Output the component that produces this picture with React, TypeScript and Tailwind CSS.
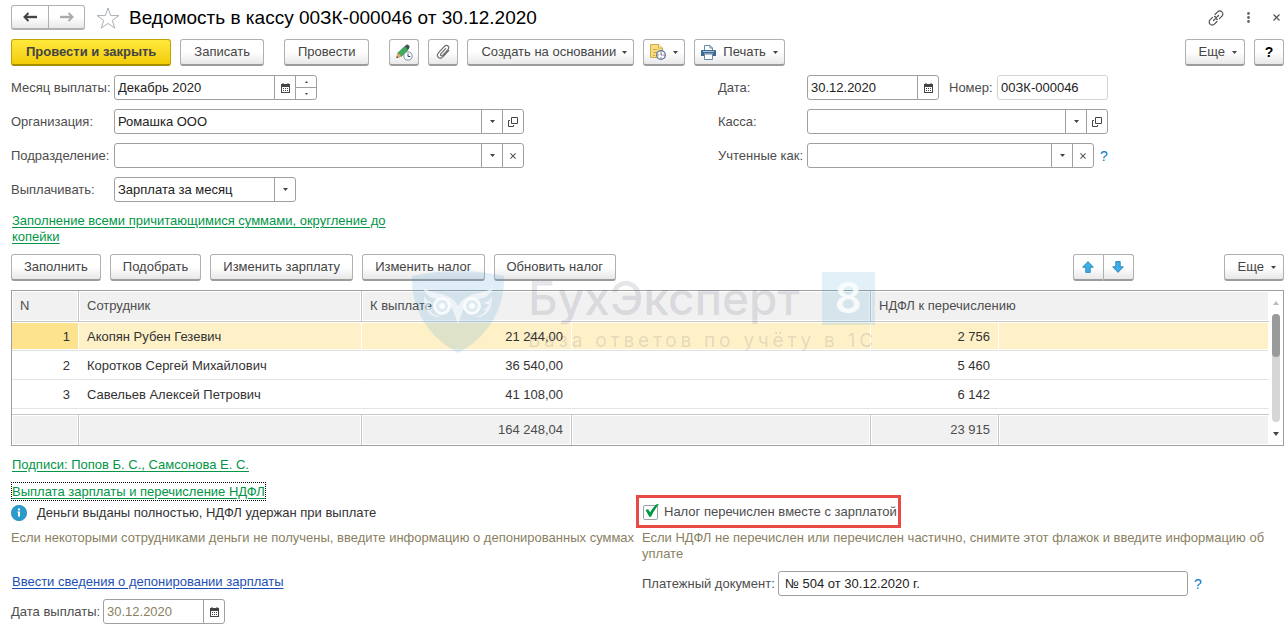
import React, { useState } from "react";

interface Employee {
  id: number;
  name: string;
  amount: string;
  tax: string;
}

const employees: Employee[] = [
  { id: 1, name: "Акопян Рубен Гезевич", amount: "21 244,00", tax: "2 756" },
  { id: 2, name: "Коротков Сергей Михайлович", amount: "36 540,00", tax: "5 460" },
  { id: 3, name: "Савельев Алексей Петрович", amount: "41 108,00", tax: "6 142" },
];

const buttonBase =
  "flex h-[27px] shrink-0 items-center justify-center rounded-[3px] border border-b-2 border-[#b0b0b0] border-b-[#9c9c9c] bg-linear-to-b from-white from-50% to-[#e8e8e8] whitespace-nowrap text-[#444]";
const fieldBox = "flex h-[25px] rounded-[3px] border border-[#a0a0a0] bg-white";
const inputBase = "min-w-0 flex-1 bg-transparent px-[3px] text-[#222] outline-none";
const addonBase = "flex w-[21px] shrink-0 items-center justify-center border-l border-[#a0a0a0] text-[#444]";
const greenLink = "text-[#009646] underline underline-offset-2";

/* ---------- Icons ---------- */

const Caret = () => (
  <svg width="5" height="3" viewBox="0 0 5 3" fill="currentColor" aria-hidden="true">
    <path d="M0 0h5L2.5 3z" />
  </svg>
);

const ArrowIcon = ({ flip }: { flip?: boolean }) => (
  <svg width="14" height="12" viewBox="0 0 14 12" fill="none" stroke="currentColor" strokeWidth="2.4" className={flip ? "rotate-180" : ""} aria-hidden="true">
    <path d="M14 6H2" />
    <path d="M5.5 2L1.500 6l4 4" strokeWidth="2" />
  </svg>
);

const StarIcon = () => (
  <svg width="24" height="22" viewBox="0 0 24 22" fill="none" stroke="#a9afb5" strokeWidth="1" aria-hidden="true">
    <path d="M12 1l2.7 7.6h8.2l-6.6 4.8 2.5 7.8-6.8-4.8-6.8 4.8 2.5-7.8L1.100 8.600h8.200z" />
  </svg>
);

const LinkIcon = () => (
  <svg width="16" height="16" viewBox="0 0 16 16" fill="none" stroke="#555" strokeWidth="1.200" strokeLinecap="round" aria-hidden="true">
    <path d="M7 4.500l2.600-2.600a2.900 2.900 0 0 1 4.300 0 2.900 2.900 0 0 1 0 4.300L11.500 8.600" />
    <path d="M9.500 9.300a2.600 2.600 0 0 1-2-.8M6.500 6.700a2.600 2.600 0 0 1 2 .8" />
    <path d="M9 11.500l-2.600 2.600a2.900 2.900 0 0 1-4.300 0 2.900 2.900 0 0 1 0-4.300L4.500 7.400" />
    <path d="M5.500 10.500l1-1M9.500 6.500l1-1" />
  </svg>
);

const DotsIcon = () => (
  <svg width="3" height="11" viewBox="0 0 3 11" fill="#666" aria-hidden="true">
    <circle cx="1.500" cy="1.500" r="1.400" />
    <circle cx="1.500" cy="5.500" r="1.400" />
    <circle cx="1.500" cy="9.500" r="1.400" />
  </svg>
);

const CrossIcon = ({ size = 6 }: { size?: number }) => (
  <svg width={size} height={size} viewBox="0 0 7 7" fill="none" stroke="#555" strokeWidth="1.200" aria-hidden="true">
    <path d="M.5.5l6 6M6.500.5l-6 6" />
  </svg>
);

const CalendarIcon = () => (
  <svg width="9" height="10" viewBox="0 0 9 10" aria-hidden="true">
    <path d="M0 1h9v9H0z" fill="#444" />
    <path d="M1 4h7v5H1z" fill="#fff" />
    <path d="M1.500 0h1v2h-1zM6.500 0h1v2h-1z" fill="#444" />
    <path d="M2 5h1v1H2zM4 5h1v1H4zM6 5h1v1H6zM2 7h1v1H2zM4 7h1v1H4zM6 7h1v1H6z" fill="#444" />
  </svg>
);

const OpenIcon = () => (
  <svg width="10" height="10" viewBox="0 0 10 10" fill="none" stroke="#444" aria-hidden="true">
    <path d="M3.500.5h6v6h-6z" />
    <path d="M2 3.500H.5v6h5V8" />
  </svg>
);

const PencilClockIcon = () => (
  <svg width="17" height="17" viewBox="0 0 17 17" aria-hidden="true">
    <path d="M8.600 2.500l3.400 3.400-6.400 6.400-3.800-3.400z" fill="#3fae5a" stroke="#2b7f42" strokeWidth=".6" />
    <path d="M8.600 2.500L10.300.8q1.200-.8 2.400.4t.8 2.600L12 5.900z" fill="#47525c" />
    <path d="M1.800 8.900l3.800 3.400-5.100 1.600z" fill="#e8b173" stroke="#b07a3c" strokeWidth=".5" />
    <path d="M.4 14l.6-2 1.400 1.400z" fill="#444" />
    <circle cx="12" cy="12" r="4.100" fill="#fff" stroke="#7d93a8" />
    <path d="M12 9.500V12.500h2.300" fill="none" stroke="#2e4a66" />
  </svg>
);

const ClipIcon = () => (
  <svg width="15" height="16" viewBox="0 0 15 16" fill="none" stroke="#666" strokeWidth="1.100" strokeLinecap="round" aria-hidden="true">
    <path d="M9.700 4.700L5 9.700c-1.300 1.500.4 2.900 1.700 1.600l5.200-5.700c2.400-2.800-.9-5.800-3.500-3.200L2.600 8.600c-3.200 3.800.9 7.400 4.300 4.200l6-6.500" />
  </svg>
);

const NoteClockIcon = () => (
  <svg width="16" height="16" viewBox="0 0 16 16" aria-hidden="true">
    <path d="M.5.5h8l4 3.500v9.500H.5z" fill="#f8dc85" stroke="#d3ab45" />
    <path d="M8.500.5V4h4" fill="#fdf0c0" stroke="#d3ab45" />
    <path d="M3 5.500h4M3 8.500h4M3 11.500h2" stroke="#cfa63c" />
    <circle cx="11" cy="11" r="4.300" fill="#fff" stroke="#4b7aa8" strokeWidth="1.300" />
    <path d="M11 7.500v1.200M11 13.300v1.200M7.500 11h1.200M13.300 11h1.200" stroke="#e02020" />
    <path d="M11 11V9M11 11h1.500" stroke="#4b7aa8" />
  </svg>
);

const PrinterIcon = () => (
  <svg width="15" height="15" viewBox="0 0 15 15" aria-hidden="true">
    <path d="M3.500 6V.5h5.500l2.500 2.500v3" fill="#fff" stroke="#6488a8" />
    <path d="M9 .5V3h2.500" fill="none" stroke="#6488a8" />
    <path d="M1 5h13q1 0 1 1v5h-3V8.500H3V11H0V6q0-1 1-1z" fill="#3b6a94" />
    <path d="M2 6.500h11" stroke="#a9c4db" />
    <path d="M3.500 9h8v5.500h-8z" fill="#fff" stroke="#6488a8" />
  </svg>
);

const MoveIcon = ({ down }: { down?: boolean }) => (
  <svg width="12" height="12" viewBox="0 0 12 12" className={down ? "rotate-180" : ""} aria-hidden="true">
    <path d="M6 .6l5.300 5.600H8.200v5.200H3.800V6.200H.7z" fill="#3bb0ee" stroke="#2c7dac" strokeWidth=".9" />
  </svg>
);

const InfoIcon = () => (
  <svg width="16" height="16" viewBox="0 0 16 16" aria-hidden="true">
    <circle cx="8" cy="8" r="7.700" fill="#2a9bcd" stroke="#1c7ba8" strokeWidth=".6" />
    <path d="M7 3.500h2v2H7zM6.300 6.500H9v5H7v-4h-.7z" fill="#fff" />
  </svg>
);

const OwlShield = () => (
  <svg width="92" height="82" viewBox="0 0 92 82" className="shrink-0" aria-hidden="true">
    <path d="M0 5Q46-5 92 5C93 38 76 66 46 82 16 66-1 38 0 5z" fill="#3f9bd1" fillOpacity=".17" />
    <g fill="#fff" fillOpacity=".6">
      <path d="M11 16c7 7 18 5 26 10 4 2 7 5 9 9 2-4 5-7 9-9 8-5 19-3 26-10-2 9-9 11-17 13-7 2-12 6-14 13l-4 11-4-11c-2-7-7-11-14-13-8-2-15-4-17-13z" />
      <path d="M12 25c2 4 5 6 9 7-3 1-4 1-6 1 1 3 3 5 6 6l-3 1c3 4 7 5 12 5-8 3-19-3-18-20zM80 25c-2 4-5 6-9 7 3 1 4 1 6 1-1 3-3 5-6 6l3 1c-3 4-7 5-12 5 8 3 19-3 18-20z" />
    </g>
    <g fill="#dfeaf1" stroke="#fff" strokeOpacity=".8" strokeWidth="3">
      <circle cx="30" cy="35" r="7.500" />
      <circle cx="60" cy="35" r="7.500" />
    </g>
    <circle cx="30" cy="35" r="3" fill="#fff" fillOpacity=".8" />
    <circle cx="60" cy="35" r="3" fill="#fff" fillOpacity=".8" />
  </svg>
);

/* ---------- Small controls ---------- */

interface ToolButtonProps {
  children: React.ReactNode;
  className?: string;
  label?: string;
}

const ToolButton = ({ children, className = "px-3", label }: ToolButtonProps) => (
  <button type="button" aria-label={label} className={`${buttonBase} ${className}`}>
    {children}
  </button>
);

const Addon = ({ children, label }: { children: React.ReactNode; label: string }) => (
  <button type="button" aria-label={label} className={addonBase}>
    {children}
  </button>
);

const HelpLink = () => (
  <a href="#help" className="ml-[6px] text-sm text-[#0a7ac8]">?</a>
);

const Watermark = () => (
  <div className="pointer-events-none absolute top-[17px] left-[401px] flex gap-6" aria-hidden="true">
    <OwlShield />
    <div className="font-[Inter,sans-serif] text-[#32325a]/14">
      <div className="flex h-[54px] items-center gap-[22px]">
        <span className="text-[46px] leading-[54px] font-medium">БухЭксперт</span>
        <span className="flex h-[53px] w-[53px] items-center justify-center bg-[#3f9bd1]/15 text-[42px] font-semibold text-white/80">8</span>
      </div>
      <div className="text-[19px] leading-[32px] tracking-[0.2em] whitespace-nowrap">База ответов по учёту в 1С</div>
    </div>
  </div>
);

const App = () => {
  const [selected, setSelected] = useState(1);
  const [taxPaid, setTaxPaid] = useState(true);

  return (
    <div className="bg-white pt-[5px] pr-1 pl-[11px] font-['Liberation_Sans',Arial,sans-serif] text-[13px] leading-4 text-[#4d4d4d]">
      {/* Title */}
      <header className="flex h-[25px] items-center">
        <div className="flex">
          <button type="button" aria-label="Назад" className="flex h-[25px] w-[38px] items-center justify-center rounded-l-[3px] border border-b-2 border-[#b0b0b0] bg-linear-to-b from-white from-50% to-[#e8e8e8] text-[#444]">
            <ArrowIcon />
          </button>
          <button type="button" aria-label="Вперед" className="flex h-[25px] w-[36px] items-center justify-center rounded-r-[3px] border border-b-2 border-l-0 border-[#b0b0b0] bg-linear-to-b from-white from-50% to-[#e8e8e8] text-[#aaa]">
            <ArrowIcon flip />
          </button>
        </div>
        <button type="button" aria-label="В избранное" className="ml-[11px]">
          <StarIcon />
        </button>
        <h1 className="ml-[9px] text-[19px] text-black">Ведомость в кассу 00ЗК-000046 от 30.12.2020</h1>
        <div className="mr-1 ml-auto flex items-center gap-[23px]">
          <button type="button" aria-label="Получить ссылку"><LinkIcon /></button>
          <button type="button" aria-label="Меню"><DotsIcon /></button>
          <button type="button" aria-label="Закрыть"><CrossIcon size={7} /></button>
        </div>
      </header>

      {/* Main commands */}
      <div className="mt-[9px] flex">
        <button type="button" className="flex h-[27px] items-center rounded-[3px] border border-b-2 border-[#c2a200] border-b-[#a88c00] bg-linear-to-b from-[#ffe93b] to-[#f3cc00] px-[14px] font-bold whitespace-nowrap text-[#444]">
          Провести и закрыть
        </button>
        <ToolButton className="ml-[9px] px-[13px]">Записать</ToolButton>
        <ToolButton className="ml-5 px-[13px]">Провести</ToolButton>
        <ToolButton label="Журнал изменений" className="ml-5 w-[30px]"><PencilClockIcon /></ToolButton>
        <ToolButton label="Присоединенные файлы" className="ml-[9px] w-[30px]"><ClipIcon /></ToolButton>
        <ToolButton className="ml-[9px] gap-[6px] pr-[6px] pl-[13px]">Создать на основании <Caret /></ToolButton>
        <ToolButton label="Напоминание" className="ml-[9px] w-[42px] gap-[7px]"><NoteClockIcon /><Caret /></ToolButton>
        <ToolButton className="ml-[9px] gap-[7px] px-[6px]"><PrinterIcon />Печать <Caret /></ToolButton>
        <div className="ml-auto flex gap-[9px]">
          <ToolButton className="gap-[7px] pr-[7px] pl-[13px]">Еще <Caret /></ToolButton>
          <ToolButton className="w-[30px] text-sm font-bold text-black">?</ToolButton>
        </div>
      </div>

      {/* Document fields */}
      <div className="mt-[9px] grid grid-cols-[707fr_566fr]">
        <div className="grid max-w-[513px] grid-cols-[103px_1fr] items-center gap-y-[9px]">
          <label htmlFor="month">Месяц выплаты:</label>
          <div className={`${fieldBox} w-[203px]`}>
            <input id="month" className={inputBase} defaultValue="Декабрь 2020" />
            <Addon label="Выбрать месяц"><CalendarIcon /></Addon>
            <div className="flex w-[21px] flex-col border-l border-[#a0a0a0]">
              <button type="button" aria-label="Больше" className="flex flex-1 items-center justify-center border-b border-[#a0a0a0]">
                <svg width="3" height="2" viewBox="0 0 3 2" aria-hidden="true"><path d="M0 2h3L1.500 0z" fill="#444" /></svg>
              </button>
              <button type="button" aria-label="Меньше" className="flex flex-1 items-center justify-center">
                <svg width="3" height="2" viewBox="0 0 3 2" aria-hidden="true"><path d="M0 0h3L1.500 2z" fill="#444" /></svg>
              </button>
            </div>
          </div>

          <label htmlFor="org">Организация:</label>
          <div className={fieldBox}>
            <input id="org" className={inputBase} defaultValue="Ромашка ООО" />
            <Addon label="Выбрать организацию"><Caret /></Addon>
            <Addon label="Открыть организацию"><OpenIcon /></Addon>
          </div>

          <label htmlFor="dept">Подразделение:</label>
          <div className={fieldBox}>
            <input id="dept" className={inputBase} />
            <Addon label="Выбрать подразделение"><Caret /></Addon>
            <Addon label="Очистить подразделение"><CrossIcon /></Addon>
          </div>

          <label htmlFor="kind">Выплачивать:</label>
          <div className={`${fieldBox} w-[182px]`}>
            <select id="kind" className={`${inputBase} appearance-none`}>
              <option>Зарплата за месяц</option>
              <option>Аванс</option>
            </select>
            <span className={addonBase}><Caret /></span>
          </div>
        </div>

        <div className="grid grid-cols-[89px_1fr] content-start items-center gap-y-[9px]">
          <label htmlFor="date">Дата:</label>
          <div className="flex items-center">
            <div className={`${fieldBox} w-[132px]`}>
              <input id="date" className={inputBase} defaultValue="30.12.2020" />
              <Addon label="Выбрать дату"><CalendarIcon /></Addon>
            </div>
            <label htmlFor="number" className="w-12 pl-[10px] whitespace-nowrap">Номер:</label>
            <div className="ml-[10px] flex h-[25px] w-[111px] rounded-[3px] border border-[#d4d4d4]">
              <input id="number" className={inputBase} defaultValue="00ЗК-000046" />
            </div>
          </div>

          <label htmlFor="cash">Касса:</label>
          <div className={`${fieldBox} w-[301px]`}>
            <input id="cash" className={inputBase} />
            <Addon label="Выбрать кассу"><Caret /></Addon>
            <Addon label="Открыть кассу"><OpenIcon /></Addon>
          </div>

          <label htmlFor="account" className="whitespace-nowrap">Учтенные как:</label>
          <div className="flex items-center">
            <div className={`${fieldBox} w-[287px]`}>
              <input id="account" className={inputBase} />
              <Addon label="Выбрать способ учета"><Caret /></Addon>
              <Addon label="Очистить способ учета"><CrossIcon /></Addon>
            </div>
            <HelpLink />
          </div>
        </div>
      </div>

      <a href="#fill" className={`mt-[11px] ml-px block w-[380px] ${greenLink}`}>
        Заполнение всеми причитающимися суммами, округление до копейки
      </a>

      {/* Employees */}
      <section className="relative mt-[9px]">
        <div className="flex gap-[9px]">
          <ToolButton>Заполнить</ToolButton>
          <ToolButton>Подобрать</ToolButton>
          <ToolButton>Изменить зарплату</ToolButton>
          <ToolButton>Изменить налог</ToolButton>
          <ToolButton>Обновить налог</ToolButton>
          <div className="mr-[81px] ml-auto flex">
            <ToolButton label="Переместить вверх" className="w-[31px] rounded-r-none"><MoveIcon /></ToolButton>
            <ToolButton label="Переместить вниз" className="w-[30px] rounded-l-none border-l-0"><MoveIcon down /></ToolButton>
          </div>
          <ToolButton className="gap-[7px] pr-[7px] pl-[13px]">Еще <Caret /></ToolButton>
        </div>

        <div className="mt-[9px] flex border border-[#a0a0a0]">
          <table className="min-w-0 flex-1 table-fixed border-separate border-spacing-0">
            <colgroup>
              <col className="w-[67px]" />
              <col className="w-[283px]" />
              <col className="w-[210px]" />
              <col className="w-[299px]" />
              <col className="w-[128px]" />
              <col />
            </colgroup>
            <thead>
              <tr className="h-[31px] bg-[#f1f1f1] text-left">
                <th className="border-r border-b border-[#c8c8c8] px-2 font-normal shadow-[inset_0_0_0_1px_white]">N</th>
                <th className="border-r border-b border-[#c8c8c8] px-2 font-normal shadow-[inset_0_0_0_1px_white]">Сотрудник</th>
                <th colSpan={2} className="border-r border-b border-[#c8c8c8] px-2 font-normal shadow-[inset_0_0_0_1px_white]">К выплате</th>
                <th colSpan={2} className="border-b border-[#c8c8c8] px-2 font-normal shadow-[inset_0_0_0_1px_white]">НДФЛ к перечислению</th>
              </tr>
            </thead>
            <tbody className="text-[#333]">
              {employees.map((row) => {
                const active = row.id === selected;
                const cell = `border-b border-b-[#e2e2e2] px-2 pt-px ${active ? "border-r border-r-white bg-[#fef1c8] shadow-[inset_0_1px_0_white,inset_0_-1px_0_white]" : "border-r border-r-transparent"}`;
                return (
                  <tr key={row.id} className="h-[29px]" onClick={() => setSelected(row.id)}>
                    <td className={`${cell} text-right ${active ? "bg-[#fee38e]!" : ""}`}>{row.id}</td>
                    <td className={cell}>{row.name}</td>
                    <td className={`${cell} text-right`}>{row.amount}</td>
                    <td className={cell} />
                    <td className={`${cell} text-right`}>{row.tax}</td>
                    <td className={cell} />
                  </tr>
                );
              })}
              <tr className="h-[5px]" aria-hidden="true">
                <td colSpan={6} />
              </tr>
            </tbody>
            <tfoot>
              <tr className="h-[31px] bg-[#f1f1f1] text-right">
                <td className="border-t border-r border-[#c8c8c8] shadow-[inset_0_0_0_1px_white]" />
                <td className="border-t border-r border-[#c8c8c8] shadow-[inset_0_0_0_1px_white]" />
                <td className="border-t border-r border-[#c8c8c8] px-2 shadow-[inset_0_0_0_1px_white]">164 248,04</td>
                <td className="border-t border-r border-[#c8c8c8] shadow-[inset_0_0_0_1px_white]" />
                <td className="border-t border-r border-[#c8c8c8] px-2 shadow-[inset_0_0_0_1px_white]">23 915</td>
                <td className="border-t border-[#c8c8c8] shadow-[inset_0_0_0_1px_white]" />
              </tr>
            </tfoot>
          </table>
          {/* Scroll bar */}
          <div className="flex w-[14px] flex-col items-center pt-[10px] pb-[9px] text-[#444]">
            <svg width="6" height="4" viewBox="0 0 6 4" aria-hidden="true"><path d="M0 4h6L3 0z" fill="#bbb" /></svg>
            <div className="mt-[9px] w-2 flex-1 rounded-full bg-[#d6d6d6]">
              <div className="h-[43px] rounded-full bg-[#9a9a9a]" />
            </div>
            <svg width="6" height="4" viewBox="0 0 6 4" className="mt-[10px]" aria-hidden="true"><path d="M0 0h6L3 4z" fill="#444" /></svg>
          </div>
        </div>
        <Watermark />
      </section>

      <a href="#signs" className={`mt-[11px] ml-px block w-fit ${greenLink}`}>Подписи: Попов Б. С., Самсонова Е. С.</a>
      <a href="#payment" className={`mt-[9px] block w-fit border border-dotted border-black pt-px ${greenLink}`}>
        Выплата зарплаты и перечисление НДФЛ
      </a>

      {/* Payment and tax */}
      <div className="grid grid-cols-[631fr_642fr]">
        <div>
          <div className="mt-[4px] flex items-center gap-[10px] text-[#333]">
            <InfoIcon />
            Деньги выданы полностью, НДФЛ удержан при выплате
          </div>
          <p className="mt-[9px] whitespace-nowrap text-[#8a7f62]">
            Если некоторыми сотрудниками деньги не получены, введите информацию о депонированных суммах
          </p>
          <a href="#deposit" className="mt-7 ml-px block w-fit text-[#1c4fb5] underline underline-offset-2">
            Ввести сведения о депонировании зарплаты
          </a>
          <div className="mt-[9px] flex items-center">
            <label htmlFor="payDate" className="w-[92px] whitespace-nowrap">Дата выплаты:</label>
            <div className={`${fieldBox} w-[122px]`}>
              <input id="payDate" className="min-w-0 flex-1 bg-transparent px-[3px] text-[#8a7f62] outline-none" defaultValue="30.12.2020" />
              <Addon label="Выбрать дату выплаты"><CalendarIcon /></Addon>
            </div>
          </div>
        </div>

        <div>
          <label className="-mt-[6px] -ml-[6px] flex h-[33px] w-fit items-center border-3 border-[#ea4a46] pt-px pr-px pl-1">
            <span className="relative mr-[6px] flex">
              <input
                type="checkbox"
                checked={taxPaid}
                onChange={(e) => setTaxPaid(e.target.checked)}
                className="h-[15px] w-[15px] appearance-none rounded-[2px] border border-[#a0a0a0] bg-white"
              />
              {taxPaid && (
                <svg width="14" height="14" viewBox="0 0 14 14" className="pointer-events-none absolute -top-px left-[2px]" aria-hidden="true">
                  <path d="M.5 6l2.600-.8 2 3.100Q8 3.500 11.500.3H14Q9 6 6 12.800H4.300z" fill="#009646" />
                </svg>
              )}
            </span>
            Налог перечислен вместе с зарплатой
          </label>
          <p className="mt-[2px] text-[#8a7f62]">
            Если НДФЛ не перечислен или перечислен частично, снимите этот флажок и введите информацию об уплате
          </p>
          <div className="mt-[9px] flex items-center">
            <label htmlFor="payDoc" className="w-[136px] whitespace-nowrap">Платежный документ:</label>
            <div className={`${fieldBox} w-[410px]`}>
              <input id="payDoc" className="min-w-0 flex-1 bg-transparent px-[6px] text-[#222] outline-none" defaultValue="№ 504 от 30.12.2020 г." />
            </div>
            <HelpLink />
          </div>
        </div>
      </div>
    </div>
  );
};

export default App;
